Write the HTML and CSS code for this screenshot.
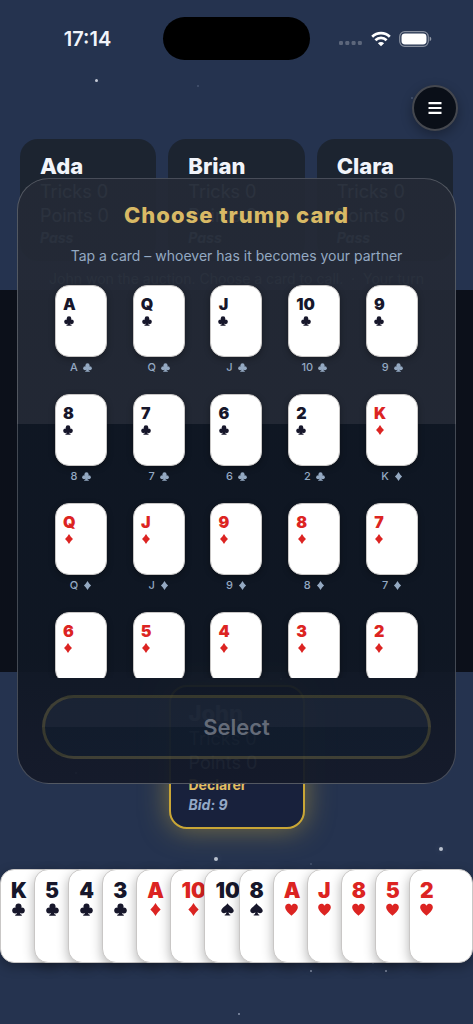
FILE: index.html
```html
<!DOCTYPE html>
<html lang="en">
<head>
<meta charset="utf-8">
<meta name="viewport" content="width=device-width, initial-scale=1">
<title>Choose trump card</title>
<link rel="stylesheet" href="styles.css">
</head>
<body>
<svg class="defs" aria-hidden="true">
  <symbol id="club" viewBox="0 0 24 24"><circle cx="12" cy="6.400" r="5.600"/><circle cx="6" cy="14" r="5.600"/><circle cx="18" cy="14" r="5.600"/><path d="M9.500 9h5v6c0 4 1 6 3.600 6.500V23.500H5.900v-2C8.500 21 9.500 19 9.500 15z"/></symbol>
  <symbol id="diamond" viewBox="0 0 24 24"><path d="M12 0C14.500 4.500 18 8.500 21.500 12 18 15.500 14.500 19.500 12 24 9.500 19.500 6 15.500 2.500 12 6 8.500 9.500 4.500 12 0z"/></symbol>
  <symbol id="spade" viewBox="0 0 24 24"><path d="M12 .5c2 4.500 11.500 8.500 11.500 14 0 5-6.500 6-9.500 2.500.3 2.500 1.200 4 3.200 4.500V23H6.800v-1.500c2-.5 2.900-2 3.200-4.500C7 20.500.5 19.500.5 14.500.5 9 10 5 12 .5z"/></symbol>
  <symbol id="heart" viewBox="0 0 24 24"><path d="M12 23.500C9 20 .3 14.500.3 7.800.3 1 9 -.8 12 5 15 -.8 23.700 1 23.700 7.800 23.700 14.500 15 20 12 23.500z"/></symbol>
</svg>
<div class="app">
  <div class="stars" aria-hidden="true">
    <i class="star bright s1"></i><i class="star faint s2"></i><i class="star faint s3"></i><i class="star big s4"></i><i class="star big s5"></i><i class="star faint s6"></i><i class="star s7"></i><i class="star faint s8"></i><i class="star s9"></i><i class="star s10"></i><i class="star s11"></i><i class="star s12"></i>
  </div>
  <header class="top">
    <div class="statusbar">
      <time class="clock">17:14</time>
      <div class="island"></div>
      <div class="signals">
        <svg width="24" height="12" viewBox="0 0 24 12" fill="#fff" opacity=".25"><rect x="0" y="8" width="4" height="4" rx="1.200"/><rect x="6.300" y="8" width="4" height="4" rx="1.200"/><rect x="12.600" y="8" width="4" height="4" rx="1.200"/><rect x="18.900" y="8" width="4" height="4" rx="1.200"/></svg>
        <svg width="20" height="16" viewBox="0 0 20 16" fill="none" stroke="#fff" stroke-width="2.700"><path d="M1.200 5.700a12.600 12.600 0 0 1 17.600 0"/><path d="M4.400 9.200a8 8 0 0 1 11.200 0"/><path d="M10 15.300 6.900 12.200a4.400 4.400 0 0 1 6.200 0z" fill="#fff" stroke="none"/></svg>
        <svg width="33" height="16" viewBox="0 0 33 16"><rect x=".7" y=".7" width="28.600" height="14.600" rx="5" fill="none" stroke="#fff" stroke-opacity=".45" stroke-width="1.200"/><rect x="2.500" y="2.500" width="25" height="11" rx="3.400" fill="#fff"/><path d="M30.700 5.800c2.100.6 2.100 3.800 0 4.400z" fill="#fff" opacity=".5"/></svg>
      </div>
    </div>
    <div class="toolbar">
      <button class="menu" aria-label="Menu"><svg width="14" height="13" viewBox="0 0 14 13" fill="#fff"><path d="M.5 0h13v2.200H.5zM.5 4.900h13v2.200H.5zM.5 9.800h13V12H.5z"/></svg></button>
    </div>
    <div class="seats">
      <section class="seat"><h2>Ada</h2><p>Tricks 0</p><p>Points 0</p><p class="note">Pass</p></section>
      <section class="seat"><h2>Brian</h2><p>Tricks 0</p><p>Points 0</p><p class="note">Pass</p></section>
      <section class="seat"><h2>Clara</h2><p>Tricks 0</p><p>Points 0</p><p class="note">Pass</p></section>
    </div>
    <p class="message">John won the auction. Choose a card to call. &nbsp;·&nbsp; Your turn</p>
  </header>
  <main class="table"></main>
  <footer class="bottom">
    <section class="seat own"><h2>John</h2><p>Tricks 0</p><p>Points 0</p><p class="role">Declarer</p><p class="note">Bid: 9</p></section>
    <div class="hand">
      <div class="slot"><button class="card large"><span class="pip">K<svg><use href="#club"/></svg></span></button></div>
      <div class="slot"><button class="card large"><span class="pip">5<svg><use href="#club"/></svg></span></button></div>
      <div class="slot"><button class="card large"><span class="pip">4<svg><use href="#club"/></svg></span></button></div>
      <div class="slot"><button class="card large"><span class="pip">3<svg><use href="#club"/></svg></span></button></div>
      <div class="slot"><button class="card large red"><span class="pip">A<svg><use href="#diamond"/></svg></span></button></div>
      <div class="slot"><button class="card large red"><span class="pip">10<svg><use href="#diamond"/></svg></span></button></div>
      <div class="slot"><button class="card large"><span class="pip">10<svg><use href="#spade"/></svg></span></button></div>
      <div class="slot"><button class="card large"><span class="pip">8<svg><use href="#spade"/></svg></span></button></div>
      <div class="slot"><button class="card large red"><span class="pip">A<svg><use href="#heart"/></svg></span></button></div>
      <div class="slot"><button class="card large red"><span class="pip">J<svg><use href="#heart"/></svg></span></button></div>
      <div class="slot"><button class="card large red"><span class="pip">8<svg><use href="#heart"/></svg></span></button></div>
      <div class="slot"><button class="card large red"><span class="pip">5<svg><use href="#heart"/></svg></span></button></div>
      <div class="slot"><button class="card large red"><span class="pip">2<svg><use href="#heart"/></svg></span></button></div>
    </div>
  </footer>
  <div class="dialog" role="dialog" aria-labelledby="dialog-title">
    <h1 id="dialog-title">Choose trump card</h1>
    <p class="hint">Tap a card – whoever has it becomes your partner</p>
    <div class="choices">
      <div class="choice"><button class="card" aria-label="A of clubs"><span class="pip">A<svg><use href="#club"/></svg></span></button><span class="name">A<svg><use href="#club"/></svg></span></div>
      <div class="choice"><button class="card" aria-label="Q of clubs"><span class="pip">Q<svg><use href="#club"/></svg></span></button><span class="name">Q<svg><use href="#club"/></svg></span></div>
      <div class="choice"><button class="card" aria-label="J of clubs"><span class="pip">J<svg><use href="#club"/></svg></span></button><span class="name">J<svg><use href="#club"/></svg></span></div>
      <div class="choice"><button class="card" aria-label="10 of clubs"><span class="pip">10<svg><use href="#club"/></svg></span></button><span class="name">10<svg><use href="#club"/></svg></span></div>
      <div class="choice"><button class="card" aria-label="9 of clubs"><span class="pip">9<svg><use href="#club"/></svg></span></button><span class="name">9<svg><use href="#club"/></svg></span></div>
      <div class="choice"><button class="card" aria-label="8 of clubs"><span class="pip">8<svg><use href="#club"/></svg></span></button><span class="name">8<svg><use href="#club"/></svg></span></div>
      <div class="choice"><button class="card" aria-label="7 of clubs"><span class="pip">7<svg><use href="#club"/></svg></span></button><span class="name">7<svg><use href="#club"/></svg></span></div>
      <div class="choice"><button class="card" aria-label="6 of clubs"><span class="pip">6<svg><use href="#club"/></svg></span></button><span class="name">6<svg><use href="#club"/></svg></span></div>
      <div class="choice"><button class="card" aria-label="2 of clubs"><span class="pip">2<svg><use href="#club"/></svg></span></button><span class="name">2<svg><use href="#club"/></svg></span></div>
      <div class="choice"><button class="card red" aria-label="K of diamonds"><span class="pip">K<svg><use href="#diamond"/></svg></span></button><span class="name">K<svg><use href="#diamond"/></svg></span></div>
      <div class="choice"><button class="card red" aria-label="Q of diamonds"><span class="pip">Q<svg><use href="#diamond"/></svg></span></button><span class="name">Q<svg><use href="#diamond"/></svg></span></div>
      <div class="choice"><button class="card red" aria-label="J of diamonds"><span class="pip">J<svg><use href="#diamond"/></svg></span></button><span class="name">J<svg><use href="#diamond"/></svg></span></div>
      <div class="choice"><button class="card red" aria-label="9 of diamonds"><span class="pip">9<svg><use href="#diamond"/></svg></span></button><span class="name">9<svg><use href="#diamond"/></svg></span></div>
      <div class="choice"><button class="card red" aria-label="8 of diamonds"><span class="pip">8<svg><use href="#diamond"/></svg></span></button><span class="name">8<svg><use href="#diamond"/></svg></span></div>
      <div class="choice"><button class="card red" aria-label="7 of diamonds"><span class="pip">7<svg><use href="#diamond"/></svg></span></button><span class="name">7<svg><use href="#diamond"/></svg></span></div>
      <div class="choice"><button class="card red" aria-label="6 of diamonds"><span class="pip">6<svg><use href="#diamond"/></svg></span></button></div>
      <div class="choice"><button class="card red" aria-label="5 of diamonds"><span class="pip">5<svg><use href="#diamond"/></svg></span></button></div>
      <div class="choice"><button class="card red" aria-label="4 of diamonds"><span class="pip">4<svg><use href="#diamond"/></svg></span></button></div>
      <div class="choice"><button class="card red" aria-label="3 of diamonds"><span class="pip">3<svg><use href="#diamond"/></svg></span></button></div>
      <div class="choice"><button class="card red" aria-label="2 of diamonds"><span class="pip">2<svg><use href="#diamond"/></svg></span></button></div>
    </div>
    <button class="select" disabled>Select</button>
  </div>
</div>
</body>
</html>
```

FILE: styles.css
```css
* { box-sizing: border-box; }
body, h1, h2, p { margin: 0; }
body { font-family: Inter, "Liberation Sans", sans-serif; background: #25334f; color: #f1f4fa; }
button { font: inherit; color: inherit; padding: 0; border: 0; }
.defs { position: absolute; width: 0; height: 0; }

.app { position: relative; display: flex; flex-direction: column; min-height: 100vh; overflow: hidden; }
.top, .bottom { background: #25334f; }
.table { flex: 1; background: #0c101a; }

.statusbar { display: grid; grid-template-columns: 1fr 147px 1fr; align-items: center; padding: 17px 12px 0; }
.clock { justify-self: center; font-size: 20px; line-height: 24px; font-weight: 600; }
.island { height: 43px; border-radius: 22px; background: #000; }
.signals { justify-self: center; display: flex; align-items: center; gap: 8px; }

.toolbar { display: flex; justify-content: flex-end; padding: 25px 15px 8px; }
.menu { display: grid; place-items: center; width: 46px; height: 46px; border: 2px solid #45484f; border-radius: 50%; background: #0a0f18; box-shadow: 0 4px 12px rgba(0, 0, 0, .3); }

.seats { display: grid; grid-template-columns: repeat(3, 1fr); gap: 12px; padding: 0 20px; }
.seat { padding: 13px 20px; border-radius: 18px; background: #1c2430; }
.seat h2 { font-size: 22px; line-height: 28px; font-weight: 800; }
.seat p { font-size: 18px; line-height: 24px; color: #b4c0d2; }
.seat .note, .seat .role { font-size: 14px; line-height: 20px; font-weight: 700; }
.seat .note { font-style: italic; color: #93a8c6; }
.seat .role { color: #e2bf62; }
.message { padding: 8px 16px 1px; font-size: 14px; line-height: 20px; text-align: center; color: #8d9bb1; }

.bottom { display: flex; flex-direction: column; gap: 40px; padding: 13px 0 61px; }
.own { align-self: center; width: 136px; padding: 12px 18px; border: 2px solid #c9a636; background: #18213c; box-shadow: 0 0 28px rgba(212, 175, 55, .5); }
.own h2 { color: #b4c0d2; }

.hand { position: relative; display: flex; }
.slot { flex: 1; min-width: 0; }
.slot:last-child { flex: none; }
.card { display: flex; width: 52px; height: 72px; padding: 9px 7px; border: 1px solid #c9c7c6; border-radius: 14px; background: #fff; color: #17172b; box-shadow: 0 2px 6px rgba(0, 0, 0, .3); }
.pip { display: flex; flex-direction: column; align-items: center; gap: 3px; font-size: 16px; line-height: 18px; font-weight: 900; }
.pip svg { width: 10px; height: 10px; fill: currentColor; }
.red { color: #dc2422; }
.large { width: 64px; height: 94px; padding: 10px; border-radius: 14px; box-shadow: 0 4px 12px rgba(0, 0, 0, .3); }
.large .pip { gap: 1px; font-size: 21px; line-height: 22px; }
.large .pip svg { width: 13px; height: 13px; }

.dialog {
  position: absolute; top: 178px; left: 17px; right: 17px;
  display: flex; flex-direction: column; padding: 22px 24px 24px;
  border: 1px solid rgba(255, 255, 255, .22); border-radius: 32px;
  background: linear-gradient(rgba(36, 42, 54, .95) 0 245px, rgba(16, 24, 36, .95) 245px 480px, rgba(20, 26, 41, .95) 600px);
}
.dialog h1 { font-size: 22px; line-height: 28px; font-weight: 800; letter-spacing: 1px; text-align: center; color: #d8b965; }
.hint { margin-top: 17px; font-size: 14px; line-height: 20px; text-align: center; color: #94a9c2; }
.choices { display: grid; grid-template-columns: repeat(5, 1fr); row-gap: 19px; height: 397px; margin-top: 15px; padding-top: 4px; overflow: hidden; }
.choice { display: flex; flex-direction: column; align-items: center; gap: 2px; }
.name { display: flex; align-items: center; gap: 5px; font-size: 11px; line-height: 16px; font-weight: 500; color: #94a9c2; }
.name svg { width: 9px; height: 9px; fill: currentColor; }
.select { height: 64px; margin-top: 17px; border: 3px solid rgba(212, 175, 55, .2); border-radius: 32px; background: linear-gradient(rgba(38, 50, 70, .4) 50%, rgba(16, 32, 50, .4) 50%); font-size: 22px; font-weight: 600; color: #646b78; }

/* Each star has its own spot in the sky. */
.stars { position: absolute; inset: 0; pointer-events: none; }
.star { position: absolute; width: 2px; height: 2px; border-radius: 50%; background: #8995ab; }
.faint { background: #46546f; }
.bright { width: 3px; height: 3px; background: #c4cad6; box-shadow: 0 0 8px rgba(255, 255, 255, .2); }
.big { width: 4px; height: 4px; background: #b9c1ce; box-shadow: 0 0 8px rgba(255, 255, 255, .2); }
.s1 { left: 95px; top: 79px; }
.s2 { left: 197px; top: 85px; }
.s3 { left: 411px; top: 97px; }
.s4 { left: 214px; top: 857px; }
.s5 { left: 439px; top: 847px; }
.s6 { left: 310px; top: 863px; }
.s7 { left: 310px; top: 970px; }
.s8 { left: 372px; top: 962px; }
.s9 { left: 385px; top: 970px; }
.s10 { left: 238px; top: 1013px; }
.s11 { left: 75px; top: 772px; }
.s12 { left: 280px; top: 678px; }
```
